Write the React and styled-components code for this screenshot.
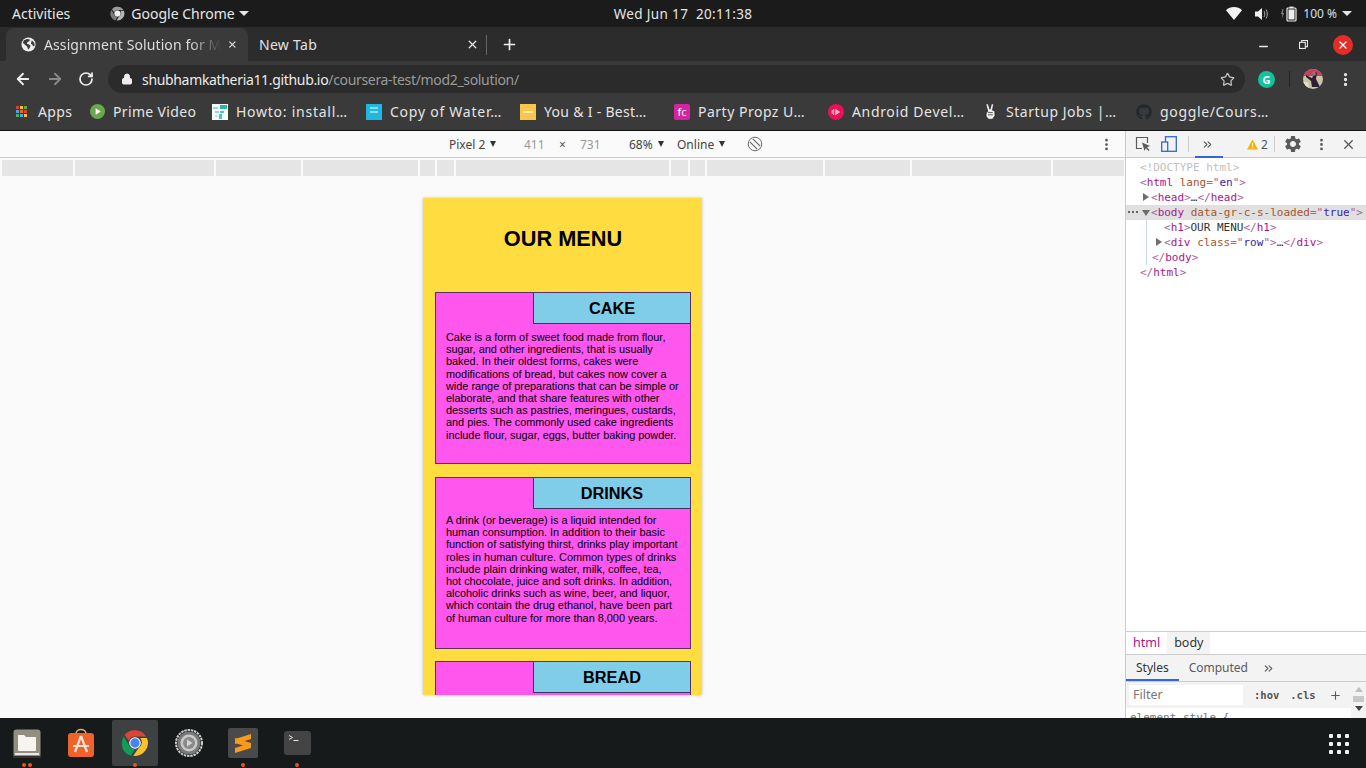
import React from "react";
import styled, { createGlobalStyle } from "styled-components";
import {
  ArrowLeft, ArrowRight, RotateCw, Lock, Star, Plus, X, Minus,
  MoreVertical, ChevronsRight,
} from "lucide-react";
import { FaGithub } from "react-icons/fa";
import { MdSettings } from "react-icons/md";

const Global = createGlobalStyle`
  html, body { margin: 0; padding: 0; background: #161a1a; }
  body { width: 1366px; height: 768px; overflow: hidden; font-family: "Noto Sans", sans-serif; }
  * { box-sizing: border-box; }
`;

const Screen = styled.div`
  width: 1366px; height: 768px; display: flex; flex-direction: column; overflow: hidden;
`;

/* GNOME top bar */
const TopBar = styled.div`
  height: 27px; background: #1b1b1b; color: #e6e6e6; font-size: 14px; flex: none;
  display: grid; grid-template-columns: 1fr auto 1fr; align-items: center;
`;
const TopLeft = styled.div`display: flex; align-items: center; padding-left: 12px;`;
const AppMenu = styled.div`display: flex; align-items: center; gap: 6px; margin-left: 40px;`;
const Clock = styled.div`font-size: 13.5px; letter-spacing: .35px;`;
const TopRight = styled.div`display: flex; align-items: center; justify-content: flex-end; padding-right: 14px;`;
const Caret = styled.span`
  display: inline-block; width: 0; height: 0; margin-left: ${p => p.$ml}px;
  border-left: 5px solid transparent; border-right: 5px solid transparent;
  border-top: 5px solid #e6e6e6;
`;
const TrayIcon = styled.div`display: flex; margin-left: ${p => p.$ml}px;`;
const Percent = styled.span`font-size: 12px; margin-left: 5px; color: #cfe0ee;`;

/* Tab strip */
const TabStrip = styled.div`
  height: 34px; flex: none; background: #2c2c2c; display: flex; align-items: stretch; padding-left: 6px;
`;
const ActiveTab = styled.div`
  width: 242px; height: 33px; background: #3a3a3a; border-radius: 8px 8px 0 0; color: #dcdcdc; margin-top: 1px;
  display: flex; align-items: center; padding: 0 10px 0 15px; font-size: 14px; letter-spacing: .1px;
`;
const TabTitle = styled.span`
  flex: 1; margin: 0 6px 0 8px; white-space: nowrap;
  -webkit-mask-image: linear-gradient(90deg, #000 82%, transparent);
  mask-image: linear-gradient(90deg, #000 82%, transparent);
`;
const InactiveTab = styled.div`
  width: 238px; color: #e2e2e2; display: flex; align-items: center; justify-content: space-between;
  padding: 1px 7px 0 11px; font-size: 14px; letter-spacing: .3px;
`;
const TabDivider = styled.div`width: 1px; height: 20px; background: #666; align-self: center; margin-top: 2px;`;
const NewTab = styled.div`display: flex; align-items: center; margin-left: 14px; padding-top: 1px; color: #eee;`;
const WindowControls = styled.div`
  margin-left: auto; display: flex; align-items: center; gap: 25px; padding: 1px 13px 0 0; color: #e8e8e8;
  & > svg:first-child { margin: 3px 4px 0 0; }
`;
const CloseDot = styled.div`
  width: 20px; height: 20px; border-radius: 50%; background: #e52d27; color: #fff;
  display: flex; align-items: center; justify-content: center;
`;

/* Address bar */
const Toolbar = styled.div`
  height: 32px; flex: none; background: #3a3a3a; display: flex; align-items: flex-start; padding: 4px 0 0 14px;
`;
const NavIcons = styled.div`display: flex; align-items: center; gap: 14px; width: 94px; height: 28px;`;
const UrlPill = styled.div`
  width: 1137px; height: 28px; border-radius: 14px; background: #2b2b2b;
  display: flex; align-items: center; padding: 0 10px 0 13px; font-size: 14px; letter-spacing: -.33px;
`;
const Host = styled.span`color: #ececec; margin-left: 9px;`;
const UrlPath = styled.span`color: #9a9a9a;`;
const StarWrap = styled.div`margin-left: auto; display: flex;`;
const ToolRight = styled.div`display: flex; align-items: center; padding-left: 13px; height: 28px;`;
const Grammarly = styled.div`
  width: 17px; height: 17px; border-radius: 50%; background: #15c39a; color: #fff; font-size: 11px; font-weight: 700;
  display: flex; align-items: center; justify-content: center;
`;
const VSep = styled.div`width: 1px; height: 16px; background: #222; margin: 0 13px 0 14px;`;

/* Bookmarks */
const Bookmarks = styled.div`
  height: 37px; flex: none; background: #3a3a3a; display: flex; align-items: center; padding-left: 16px; color: #e4e4e4; font-size: 14px;
`;
const Bookmark = styled.div`
  width: ${p => p.$w}px; display: flex; align-items: center; gap: 8px; white-space: nowrap; flex: none;
  letter-spacing: ${p => p.$ls ?? .55}px;
`;
const Fav = styled.div`
  width: 16px; height: 16px; flex: none; border-radius: ${p => p.$r || 0}; background: ${p => p.$bg};
  display: flex; align-items: center; justify-content: center; color: #fff; font-size: 11px; letter-spacing: 0; overflow: hidden;
`;
const AppsGrid = styled.div`
  width: 11px; height: 11px; display: grid; grid-template-columns: repeat(3, 3px); grid-auto-rows: 3px; gap: 1px; margin-right: 3px;
`;
const AppsDot = styled.div`background: ${p => p.$c};`;

/* Main */
const Main = styled.div`
  height: 588px; flex: none; display: flex; border-top: 1px solid #111; background: #fafafa;
`;
const Emulator = styled.div`width: 1125px; display: flex; flex-direction: column; overflow: hidden;`;
const DeviceBar = styled.div`
  height: 27px; flex: none; border-bottom: 1px solid #ccc; background: #fafafa; display: flex; align-items: center;
  padding-left: 449px; font-size: 12px; color: #444;
`;
const DevCell = styled.div`width: ${p => p.$w}px; flex: none; color: ${p => p.$c || "#444"}; display: flex; align-items: center;`;
const DevCaret = styled.span`
  width: 0; height: 0; margin-left: 5px; border-left: 3.5px solid transparent; border-right: 3.5px solid transparent; border-top: 6px solid #333;
`;
const DevMore = styled.div`margin-left: auto; padding-right: 11px; display: flex; color: #555;`;
const MediaBars = styled.div`
  height: 16px; margin: 2px 1px 0 2px; flex: none; display: flex; gap: 2px;
`;
const MediaSeg = styled.div`height: 16px; background: #e5e5e5; width: ${p => p.$w}px; flex: ${p => p.$w ? "none" : 1};`;
const Stage = styled.div`flex: 1; min-height: 0; display: flex; justify-content: center; padding: 22px 0 23px 0;`;

/* The phone page */
const Page = styled.div`
  width: 279px; background: #ffdd40; overflow: hidden; box-shadow: 0 0 3px rgba(0,0,0,.22);
  font-family: "Liberation Sans", Arial, sans-serif; color: #000; padding: 0 11px 0 12px;
`;
const Heading = styled.h1`
  margin: 28px 0 41px; font-size: 21.76px; line-height: 25px; font-weight: 700; text-align: center;
`;
const Card = styled.section`
  height: 172px; margin-bottom: 12.5px; background: #ff56ee; border: 1px solid #55306b;
  display: flex; flex-direction: column;
`;
const CardTitle = styled.h2`
  margin: 0; align-self: flex-end; width: 157px; height: 31px; background: #7fcde8;
  border-left: 1px solid #3a3560; border-bottom: 1px solid #3a3560; text-align: center;
  font-size: 16.32px; line-height: 31px; font-weight: 700;
`;
const CardText = styled.p`
  margin: ${p => p.$mt}px ${p => p.$mr}px 0 10px; font-size: 10.88px; line-height: 12.2px;
`;

/* Devtools */
const DevTools = styled.div`
  width: 241px; flex: none; border-left: 1px solid #ccc; background: #fff; display: flex; flex-direction: column; overflow: hidden;
`;
const DtBar = styled.div`
  height: 27px; flex: none; background: #f3f3f3; border-bottom: 1px solid #ccc; display: flex; align-items: center; color: #5a5a5a; position: relative;
`;
const DtIcon = styled.div`display: flex; margin-left: ${p => p.$ml}px; color: ${p => p.$c || "#5a5a5a"};`;
const DtDiv = styled.div`width: 1px; height: 16px; background: #ccc; margin-left: ${p => p.$ml}px;`;
const DtActive = styled.div`
  position: absolute; left: 69px; bottom: -1px; width: 28px; height: 2px; background: #3367d6;
`;
const WarnCount = styled.span`font-size: 12px; margin-left: 3px; color: #555;`;
const Tree = styled.div`
  flex: 1; min-height: 0; padding-top: 2px; font-family: "DejaVu Sans Mono", monospace; font-size: 11px; line-height: 15px; color: #333;
`;
const TreeRow = styled.div`
  height: 15px; white-space: pre; padding-left: ${p => p.$i}px; position: relative; background: ${p => p.$sel ? "#e0e0e0" : "transparent"};
  ${p => p.$guide ? "&::before{content:'';position:absolute;left:20px;top:0;bottom:0;width:1px;background:#c6d4ec;}" : ""}
`;
const Tg = styled.span`color: ${p => p.$dim ? "#c0c0c0" : "#a8148b"};`;
const Tbr = styled.span`color: #a8609a;`;
const Attr = styled.span`color: #a8542c;`;
const Val = styled.span`color: #3a1cb0;`;
const Tri = styled.span`
  position: absolute; left: ${p => p.$l}px; top: ${p => p.$down ? 5 : 3}px; width: 0; height: 0;
  ${p => p.$down
    ? "border-left:4px solid transparent;border-right:4px solid transparent;border-top:6px solid #6e6e6e;"
    : "border-top:4px solid transparent;border-bottom:4px solid transparent;border-left:6px solid #6e6e6e;"}
`;
const RowDots = styled.span`
  position: absolute; left: 2px; top: 6px; width: 2px; height: 2px; background: #666; box-shadow: 4px 0 #666, 8px 0 #666;
`;
const Crumbs = styled.div`
  height: 24px; flex: none; border-top: 1px solid #ccc; border-bottom: 1px solid #ccc; display: flex; font-size: 12.5px; background: #fff;
`;
const Crumb = styled.div`
  padding: 0 7px; line-height: 22px; color: ${p => p.$c}; background: ${p => p.$bg || "transparent"};
`;
const SubTabs = styled.div`
  height: 27px; flex: none; background: #f3f3f3; border-bottom: 1px solid #ccc; display: flex; align-items: center; font-size: 12px; color: #5a5a5a;
`;
const SubTab = styled.div`
  height: 26px; line-height: 25px; padding: 0 10px 0 10px; color: ${p => p.$on ? "#333" : "#5a5a5a"};
  ${p => p.$on ? "box-shadow: inset 0 -2px 0 #3367d6;" : ""}
`;
const FilterRow = styled.div`
  flex: none; height: 26px; background: #f3f3f3; display: flex; align-items: center; padding-left: 3px; position: relative;
`;
const FilterBox = styled.div`
  width: 114px; height: 20px; background: #fff; color: #777; font-size: 12.5px; line-height: 20px; padding-left: 4px;
`;
const FilterBtn = styled.span`
  font-family: "DejaVu Sans Mono", monospace; font-weight: 700; font-size: 10.5px; color: #555; margin-left: ${p => p.$ml}px;
`;
const ScrollTrack = styled.div`
  position: absolute; right: 0; top: 0; bottom: -10px; width: 15px; background: #f3f3f3;
  display: flex; flex-direction: column; align-items: center; padding-top: 5px; gap: 4px;
`;
const ScrollUp = styled.span`width:0;height:0;border-left:4px solid transparent;border-right:4px solid transparent;border-bottom:5px solid #c0c0c0;`;
const ScrollThumb = styled.span`width: 11px; height: 6px; background: #c8c8c8;`;
const ScrollDown = styled.span`width:0;height:0;border-left:4px solid transparent;border-right:4px solid transparent;border-top:5px solid #444;`;
const StyleCut = styled.div`
  flex: none; height: 10px; padding: 2px 0 0 1px; background: #fff; margin: 0 15px 0 3px; font-family: "DejaVu Sans Mono", monospace;
  font-size: 11px; line-height: 15px; color: #777; overflow: hidden; white-space: pre;
`;

/* Dock */
const Dock = styled.div`
  flex: 1; background: #161a1a; display: flex; align-items: center; position: relative;
`;
const DockItem = styled.div`
  width: 54px; height: 46px; display: flex; align-items: center; justify-content: center; position: relative; flex: none;
  ${p => p.$on ? "&::before{content:'';position:absolute;left:4px;right:4px;top:0;bottom:0;background:#3e4141;border-radius:2px;}" : ""}
  & > svg { position: relative; }
`;
const RunDots = styled.div`position: absolute; bottom: -1px; left: 0; right: 0; display: flex; justify-content: center; gap: 2px;`;
const RunDot = styled.span`width: 4px; height: 4px; border-radius: 50%; background: #e95420;`;
const Grid9 = styled.div`
  position: absolute; right: 17px; top: 16px; display: grid; grid-template-columns: repeat(3, 4px); grid-auto-rows: 4px; gap: 4px;
`;
const GridDot = styled.span`background: #f2f2f2; border-radius: 1px;`;

const ChromeLogo = ({ size, grey }) => (
  <svg width={size} height={size} viewBox="0 0 48 48">
    <path d="M24 2a22 22 0 0 1 19.05 11H24a11 11 0 0 0-10.4 7.4L6.1 10A22 22 0 0 1 24 2z" fill={grey ? "#9a9a9a" : "#db4437"} />
    <path d="M4.9 13 15 30.5A11 11 0 0 0 24 35l-7 11.2A22 22 0 0 1 4.9 13z" fill={grey ? "#7a7a7a" : "#0f9d58"} transform="translate(0,-.2)" />
    <path d="M44.4 15.5A22 22 0 0 1 21 45.8l9.6-13.8A11 11 0 0 0 33 15.5z" fill={grey ? "#b5b5b5" : "#fbc02d"} />
    <circle cx="24" cy="24" r="9" fill={grey ? "#eee" : "#4285f4"} stroke="#fff" strokeWidth="2" />
  </svg>
);

const GlobeIcon = () => (
  <svg width="15" height="15" viewBox="0 0 16 16" style={{ flex: "none" }}>
    <circle cx="8" cy="8" r="7.5" fill="#eee" />
    <path d="M3 3.5 6.5 2l3 .6-.6 2-2 .6-.6 2.200 2 .3 1.800 1.500-1 2.800-1.600 1.400-.8-3-1.800-1.600L2 6.500z" fill="#3a3a3a" />
    <path d="M11.500 3.500 14 6l.6 3-1.600 1-1-2-1.400-.6.4-2z" fill="#3a3a3a" />
  </svg>
);

const PlayFav = () => (
  <svg width="15" height="15" viewBox="0 0 16 16">
    <circle cx="8" cy="8" r="8" fill="#6aa84f" />
    <path d="M6 4.500v7l5.500-3.500z" fill="#fff" />
  </svg>
);

const Wifi = () => (
  <svg width="16" height="13" viewBox="0 0 16 13"><path d="M8 13 0 3.200C2 1.200 5 0 8 0s6 1.200 8 3.200z" fill="#f2f2f2" /></svg>
);
const Battery = () => (
  <svg width="18" height="16" viewBox="0 0 18 16">
    <path d="M2.500 3 1 8h1.400L1.800 13 4 7H2.600L3.600 3z" fill="#888" />
    <rect x="7" y="2" width="9" height="13" rx="1" fill="none" stroke="#eee" strokeWidth="1.200" />
    <rect x="9.500" y="0.600" width="4" height="1.600" fill="#eee" />
    <rect x="8.500" y="3.500" width="6" height="10" fill="#eee" />
  </svg>
);
const Speaker = () => (
  <svg width="13" height="14" viewBox="0 0 13 14">
    <path d="M0 4.500h3L7 1v12L3 9.500H0z" fill="#f0f0f0" />
    <path d="M9 4c1 1.600 1 4.400 0 6M11 2.500c1.800 2.600 1.800 6.400 0 9" stroke="#aaa" strokeWidth="1" fill="none" />
  </svg>
);
const Restore = () => (
  <svg width="9" height="9" viewBox="0 0 10 10" fill="none" stroke="#e8e8e8" strokeWidth="1.200">
    <rect x=".6" y="2.600" width="6.400" height="6.800" /><path d="M3 2.500V.6h6.400v6.800H7.200" />
  </svg>
);
const AvatarPic = () => (
  <svg width="20" height="20" viewBox="0 0 20 20">
    <clipPath id="avatarClip"><circle cx="10" cy="10" r="10" /></clipPath>
    <g clipPath="url(#avatarClip)">
      <rect width="20" height="20" fill="#c9c4a4" />
      <rect width="20" height="7" fill="#c83f5e" />
      <path d="M3 6 9 9l3-6 2 1-1 6 4 8H9l-1-6-5-4z" fill="#2d2036" />
      <path d="M9 3l3-1 1 4-3 1z" fill="#9a6f7d" />
      <path d="M0 12l5 2 1 6H0z" fill="#e6e4c8" />
    </g>
  </svg>
);
const HowtoFav = () => (
  <svg width="16" height="16" viewBox="0 0 16 16">
    <rect width="16" height="16" fill="#f4fbfa" />
    <path d="M8 1h7v4H8z" fill="#2fb3a8" /><path d="M1 3h5v2H1zM3 7h4v2H3z" fill="#8fdcd4" />
    <path d="M8 7h4v2H8zM7 10h3v5H7z" fill="#4cc4ba" /><path d="M3 11h3v2H3z" fill="#b5ebe6" />
  </svg>
);
const PeaceFav = () => (
  <svg width="15" height="17" viewBox="0 0 15 17" fill="#eee" stroke="#222" strokeWidth=".7">
    <path d="M2.800 1 5 0.600 7 6.200 8.500.6l2.200.4L9.500 7.200l2.300.7.200 4.800-2.500 3.600H5.500L3 13.200l.3-3.800L4.800 8.600z" />
    <path d="M5 9.600h4.800M5 11.800h4.800" fill="none" />
  </svg>
);
const AndroidFav = () => (
  <svg width="16" height="16" viewBox="0 0 16 16">
    <circle cx="8" cy="8" r="8" fill="#ec0f5c" />
    <path d="M7.200 4.500v7l5-3.500z" fill="#fbb6cf" />
    <path d="M4.200 6v4M5.700 5v6" stroke="#fbd5e3" strokeWidth=".9" />
  </svg>
);
const RotateDevice = () => (
  <svg width="16" height="16" viewBox="0 0 16 16" fill="none" stroke="#6a6a6a" strokeWidth="1">
    <circle cx="8" cy="8" r="6.800" />
    <path d="M2.800 5.800 10.200 13.200M5.800 2.800 13.200 10.200" strokeWidth="1.200" />
  </svg>
);
const InspectIcon = () => (
  <svg width="16" height="16" viewBox="0 0 16 16" fill="none">
    <path d="M7 12.500H1.500v-11h11V7" stroke="#5a5a5a" strokeWidth="1.200" />
    <path d="M7 6.500 15 10l-3 1.200 2.600 2.800-1.200 1.100-2.600-2.800L9.500 15z" fill="#5a5a5a" />
  </svg>
);
const DeviceIcon = () => (
  <svg width="16" height="16" viewBox="0 0 16 16" fill="none" stroke="#3367d6" strokeWidth="1.300">
    <rect x="4.500" y=".7" width="10.800" height="14.600" /><rect x=".7" y="6" width="6" height="9.300" fill="#f3f3f3" />
  </svg>
);
const Warn = () => (
  <svg width="11" height="11" viewBox="0 0 12 11"><path d="M6 0 12 11H0z" fill="#f4b400" /><path d="M5.400 4h1.200v3.600H5.400zM5.400 8.400h1.200v1.200H5.400z" fill="#fff" /></svg>
);
const DockFiles = () => (
  <svg width="28" height="29" viewBox="0 0 28 29">
    <rect x=".5" y=".5" width="27" height="28" rx="3" fill="#938f80" />
    <path d="M5 6h6l2 2h10v13a1 1 0 0 1-1 1H6a1 1 0 0 1-1-1z" fill="#f6f4ef" />
    <rect x="2" y="24" width="24" height="2" fill="#e8e8e8" />
    <rect x="0" y="27" width="28" height="2" fill="#33302c" />
  </svg>
);
const DockStore = () => (
  <svg width="28" height="30" viewBox="0 0 28 30">
    <path d="M9 6c0-6 10-6 10 0" stroke="#eca27c" strokeWidth="1.600" fill="none" />
    <rect x="1" y="5" width="26" height="24" rx="3" fill="#f0622c" />
    <path d="M14 8 8 24M14 8l6 16M6 18h16" stroke="#fbe3d6" strokeWidth="2.200" fill="none" />
  </svg>
);
const DockSettings = () => (
  <svg width="28" height="28" viewBox="0 0 28 28" fill="none">
    <circle cx="14" cy="14" r="13" fill="none" stroke="#cfcfcf" strokeWidth="2" strokeDasharray="2.500 .8" />
    <circle cx="14" cy="14" r="11.500" fill="#7a7a7a" />
    <circle cx="14" cy="14" r="8.500" fill="#c9c9c9" />
    <circle cx="14" cy="14" r="6" fill="#8a8a8a" />
    <path d="M12 10.500v7l5.500-3.500z" fill="#d5d5d5" />
  </svg>
);
const DockSublime = () => (
  <svg width="30" height="30" viewBox="0 0 30 30">
    <rect width="30" height="30" rx="2" fill="#4a4a4a" />
    <path d="M23 6v5L7 16v-5z" fill="#f89a1c" />
    <path d="M7 10 23 15v5L7 25v-5l8-2.500L7 15z" fill="#f89a1c" />
  </svg>
);
const DockTerminal = () => (
  <svg width="27" height="24" viewBox="0 0 27 24">
    <rect width="27" height="24" rx="3" fill="#444444" />
    <path d="M5 4.500 8.500 6.500 5 8.500" stroke="#e5e5e5" strokeWidth="1" fill="none" />
    <path d="M9.500 9.500h5" stroke="#e5e5e5" strokeWidth="1" />
  </svg>
);

const mediaWidths = [71, 139, 85, 115, 15, 17, 213, 17, 15, 116, 85, 139, 0];
const appsColors = ["#e53935", "#fbc02d", "#4caf50", "#42a5f5", "#ef6c00", "#e53935", "#4caf50", "#42a5f5", "#fbc02d"];

export default function App() {
  return (
    <Screen>
      <Global />
      <TopBar>
        <TopLeft>
          <span>Activities</span>
          <AppMenu>
            <ChromeLogo size={15} grey />
            <span>Google Chrome</span>
            <Caret $ml={-2} />
          </AppMenu>
        </TopLeft>
        <Clock>Wed Jun 17&nbsp; 20:11:38</Clock>
        <TopRight>
          <Wifi />
          <TrayIcon $ml={13}><Speaker /></TrayIcon>
          <TrayIcon $ml={12}><Battery /></TrayIcon>
          <Percent>100 %</Percent>
          <Caret $ml={5} />
        </TopRight>
      </TopBar>

      <TabStrip>
        <ActiveTab>
          <GlobeIcon />
          <TabTitle>Assignment Solution for M</TabTitle>
          <X size={13} color="#e8e8e8" strokeWidth={2.4} />
        </ActiveTab>
        <InactiveTab>
          <span>New Tab</span>
          <X size={13} color="#e8e8e8" strokeWidth={2.4} />
        </InactiveTab>
        <TabDivider />
        <NewTab><Plus size={17} strokeWidth={2.4} /></NewTab>
        <WindowControls>
          <Minus size={13} strokeWidth={2.6} />
          <Restore />
          <CloseDot><X size={12} strokeWidth={2.4} /></CloseDot>
        </WindowControls>
      </TabStrip>

      <Toolbar>
        <NavIcons>
          <ArrowLeft size={18} color="#eee" strokeWidth={2.4} />
          <ArrowRight size={18} color="#8a8a8a" strokeWidth={2.4} />
          <RotateCw size={16} color="#eee" strokeWidth={2.6} />
        </NavIcons>
        <UrlPill>
          <Lock size={12} color="#eee" fill="#eee" />
          <Host>shubhamkatheria11.github.io<UrlPath>/coursera-test/mod2_solution/</UrlPath></Host>
          <StarWrap><Star size={15} color="#c4c4c4" strokeWidth={2} /></StarWrap>
        </UrlPill>
        <ToolRight>
          <Grammarly>G</Grammarly>
          <VSep />
          <AvatarPic />
          <MoreVertical size={17} color="#eee" strokeWidth={2.6} style={{ marginLeft: 14 }} />
        </ToolRight>
      </Toolbar>

      <Bookmarks>
        <Bookmark $w={74} $ls={.4}>
          <AppsGrid>{appsColors.map((c, i) => <AppsDot key={i} $c={c} />)}</AppsGrid>
          Apps
        </Bookmark>
        <Bookmark $w={122} $ls={.35}><PlayFav />Prime Video</Bookmark>
        <Bookmark $w={154} $ls={.75}><Fav $bg="#f4fbfa"><HowtoFav /></Fav>Howto: install…</Bookmark>
        <Bookmark $w={154} $ls={.75}><Fav $bg="#1eb8e0"><svg width="16" height="16" viewBox="0 0 16 16"><path d="M4 4h8M4 8h8" stroke="#fff" strokeWidth="1" /></svg></Fav>Copy of Water…</Bookmark>
        <Bookmark $w={154} $ls={.3}><Fav $bg="#f7c64a"><svg width="16" height="16" viewBox="0 0 16 16"><path d="M3 8h10" stroke="#fde9a8" strokeWidth="2" /></svg></Fav>You &amp; I - Best…</Bookmark>
        <Bookmark $w={154} $ls={.5}><Fav $bg="#d5249f" $r="2px">fc</Fav>Party Propz U…</Bookmark>
        <Bookmark $w={154} $ls={.65}><Fav $bg="transparent"><AndroidFav /></Fav>Android Devel…</Bookmark>
        <Bookmark $w={154} $ls={.55}><Fav $bg="transparent"><PeaceFav /></Fav>Startup Jobs |…</Bookmark>
        <Bookmark $w={154} $ls={.65}><Fav $bg="transparent"><FaGithub size={16} color="#23282c" /></Fav>goggle/Cours…</Bookmark>
      </Bookmarks>

      <Main>
        <Emulator>
          <DeviceBar>
            <DevCell $w={75}>Pixel 2<DevCaret /></DevCell>
            <DevCell $w={35} $c="#999">411</DevCell>
            <DevCell $w={21} $c="#555">×</DevCell>
            <DevCell $w={49} $c="#999">731</DevCell>
            <DevCell $w={48}>68%<DevCaret /></DevCell>
            <DevCell $w={70}>Online<DevCaret /></DevCell>
            <RotateDevice />
            <DevMore><MoreVertical size={15} strokeWidth={2.4} /></DevMore>
          </DeviceBar>
          <MediaBars>
            {mediaWidths.map((w, i) => <MediaSeg key={i} $w={w} />)}
          </MediaBars>
          <Stage>
            <Page>
              <Heading>OUR MENU</Heading>
              <Card>
                <CardTitle>CAKE</CardTitle>
                <CardText $mt={7} $mr={10}>
                  Cake is a form of sweet food made from flour, sugar, and other ingredients, that is usually baked. In their oldest forms, cakes were modifications of bread, but cakes now cover a wide range of preparations that can be simple or elaborate, and that share features with other desserts such as pastries, meringues, custards, and pies. The commonly used cake ingredients include flour, sugar, eggs, butter baking powder.
                </CardText>
              </Card>
              <Card>
                <CardTitle>DRINKS</CardTitle>
                <CardText $mt={5.5} $mr={11}>
                  A drink (or beverage) is a liquid intended for human consumption. In addition to their basic function of satisfying thirst, drinks play important roles in human culture. Common types of drinks include plain drinking water, milk, coffee, tea, hot chocolate, juice and soft drinks. In addition, alcoholic drinks such as wine, beer, and liquor, which contain the drug ethanol, have been part of human culture for more than 8,000 years.
                </CardText>
              </Card>
              <Card>
                <CardTitle>BREAD</CardTitle>
              </Card>
            </Page>
          </Stage>
        </Emulator>

        <DevTools>
          <DtBar>
            <DtIcon $ml={9}><InspectIcon /></DtIcon>
            <DtIcon $ml={10}><DeviceIcon /></DtIcon>
            <DtDiv $ml={11} />
            <DtIcon $ml={12}><ChevronsRight size={13} /></DtIcon>
            <DtActive />
            <DtIcon $ml={33}><Warn /></DtIcon>
            <WarnCount>2</WarnCount>
            <DtDiv $ml={6} />
            <DtIcon $ml={8}><MdSettings size={20} /></DtIcon>
            <DtIcon $ml={11}><MoreVertical size={15} strokeWidth={2.5} /></DtIcon>
            <DtIcon $ml={12}><X size={15} strokeWidth={2.2} /></DtIcon>
          </DtBar>
          <Tree>
            <TreeRow $i={14}><Tg $dim>&lt;!DOCTYPE html&gt;</Tg></TreeRow>
            <TreeRow $i={14}><Tbr>&lt;</Tbr><Tg>html</Tg> <Attr>lang</Attr><Tbr>="</Tbr><Val>en</Val><Tbr>"&gt;</Tbr></TreeRow>
            <TreeRow $i={25}><Tri $l={17} /><Tbr>&lt;</Tbr><Tg>head</Tg><Tbr>&gt;</Tbr>…<Tbr>&lt;/</Tbr><Tg>head</Tg><Tbr>&gt;</Tbr></TreeRow>
            <TreeRow $i={25} $sel><RowDots /><Tri $l={16} $down /><Tbr>&lt;</Tbr><Tg>body</Tg> <Attr>data-gr-c-s-loaded</Attr><Tbr>="</Tbr><Val>true</Val><Tbr>"&gt;</Tbr></TreeRow>
            <TreeRow $i={38} $guide><Tbr>&lt;</Tbr><Tg>h1</Tg><Tbr>&gt;</Tbr>OUR MENU<Tbr>&lt;/</Tbr><Tg>h1</Tg><Tbr>&gt;</Tbr></TreeRow>
            <TreeRow $i={38} $guide><Tri $l={30} /><Tbr>&lt;</Tbr><Tg>div</Tg> <Attr>class</Attr><Tbr>="</Tbr><Val>row</Val><Tbr>"&gt;</Tbr>…<Tbr>&lt;/</Tbr><Tg>div</Tg><Tbr>&gt;</Tbr></TreeRow>
            <TreeRow $i={26} $guide><Tbr>&lt;/</Tbr><Tg>body</Tg><Tbr>&gt;</Tbr></TreeRow>
            <TreeRow $i={14}><Tbr>&lt;/</Tbr><Tg>html</Tg><Tbr>&gt;</Tbr></TreeRow>
          </Tree>
          <Crumbs>
            <Crumb $c="#a8148b">html</Crumb>
            <Crumb $c="#333" $bg="#f3f3f3">body</Crumb>
          </Crumbs>
          <SubTabs>
            <SubTab $on>Styles</SubTab>
            <SubTab>Computed</SubTab>
            <DtIcon $ml={4}><ChevronsRight size={13} /></DtIcon>
          </SubTabs>
          <FilterRow>
            <FilterBox>Filter</FilterBox>
            <FilterBtn $ml={11}>:hov</FilterBtn>
            <FilterBtn $ml={11}>.cls</FilterBtn>
            <DtIcon $ml={13}><Plus size={13} strokeWidth={2} /></DtIcon>
            <ScrollTrack><ScrollUp /><ScrollThumb /><ScrollDown /></ScrollTrack>
          </FilterRow>
          <StyleCut>element.style {"{"}</StyleCut>
        </DevTools>
      </Main>

      <Dock>
        <DockItem><DockFiles /><RunDots><RunDot /><RunDot /></RunDots></DockItem>
        <DockItem><DockStore /></DockItem>
        <DockItem $on><ChromeLogo size={28} /><RunDots><RunDot /></RunDots></DockItem>
        <DockItem><DockSettings /></DockItem>
        <DockItem><DockSublime /><RunDots><RunDot /></RunDots></DockItem>
        <DockItem><DockTerminal /><RunDots><RunDot /></RunDots></DockItem>
        <Grid9>{Array.from({ length: 9 }).map((_, i) => <GridDot key={i} />)}</Grid9>
      </Dock>
    </Screen>
  );
}
